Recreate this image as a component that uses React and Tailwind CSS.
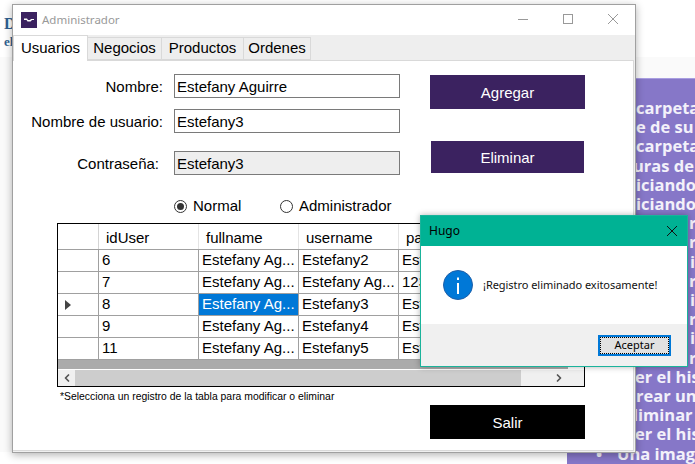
import React from 'react';
import { ChevronLeft, ChevronRight } from 'lucide-react';

const rows = [
  { id: '6', fullname: 'Estefany Ag...', username: 'Estefany2', pass: 'Estefany2' },
  { id: '7', fullname: 'Estefany Ag...', username: 'Estefany Ag...', pass: '12345678' },
  { id: '8', fullname: 'Estefany Ag...', username: 'Estefany3', pass: 'Estefany3', selected: true },
  { id: '9', fullname: 'Estefany Ag...', username: 'Estefany4', pass: 'Estefany4' },
  { id: '11', fullname: 'Estefany Ag...', username: 'Estefany5', pass: 'Estefany5' },
];

// fragments of the page behind the window, one per line
const backdropLines = [
  { text: 'carpeta', pad: 'ml-[69px]' },
  { text: 'e de su', pad: 'ml-[69px]' },
  { text: 'carpeta', pad: 'ml-[69px]' },
  { text: 'uras de', pad: 'ml-[66px]' },
  { text: 'iciando', pad: 'ml-[69px]' },
  { text: 'iciando', pad: 'ml-[69px]' },
  { text: 'r', pad: 'ml-[122px]' },
  { text: 'r', pad: 'ml-[122px]' },
  { text: 'i', pad: 'ml-[123px]' },
  { text: 'r', pad: 'ml-[122px]' },
  { text: 'i', pad: 'ml-[123px]' },
  { text: 'r', pad: 'ml-[122px]' },
  { text: 'i', pad: 'ml-[123px]' },
  { text: 'r', pad: 'ml-[122px]' },
  { text: 'er el his', pad: 'ml-[68px]' },
  { text: 'rear un', pad: 'ml-[69px]' },
  { text: 'liminar', pad: 'ml-[66px]' },
  { text: 'er el his', pad: 'ml-[68px]' },
];

const FormRow = ({ label, value, labelClass, className, disabled }) => (
  <div className={`flex items-center h-[24px] ${className}`}>
    <span className={`w-[161px] pt-[2px] text-right text-[15px] text-black shrink-0 ${labelClass}`}>{label}</span>
    <div className={`w-[226px] h-[24px] border border-[#7a7a7a] pl-[2px] pt-[2px] flex items-center text-[15px] text-black ${disabled ? 'bg-[#eeeeee]' : 'bg-white'}`}>
      {value}
    </div>
  </div>
);

const Radio = ({ label, checked, className }) => (
  <div className={`flex items-center gap-[6px] ${className}`}>
    <div className="w-[13px] h-[13px] rounded-full border border-[#333] flex items-center justify-center">
      {checked && <div className="w-[7px] h-[7px] rounded-full bg-[#333]" />}
    </div>
    <span className="text-[15px] text-black">{label}</span>
  </div>
);

const Cell = ({ children, selected }) => (
  <div className={`w-[100px] shrink-0 h-full border-r border-[#a0a0a0] pl-[3px] flex items-center whitespace-nowrap overflow-hidden ${selected ? 'bg-[#0078d7] text-white' : 'text-black'}`}>
    {children}
  </div>
);

const HeaderCell = ({ children }) => (
  <div className="w-[100px] shrink-0 h-full border-r border-[#e4e4e4] pl-[7px] pt-[4px] flex items-center">{children}</div>
);

const DataGrid = () => (
  <div className="ml-[44px] w-[528px] h-[164px] border-[1.5px] border-black text-[15px] overflow-hidden bg-white">
    <div className="flex h-[26px] border-b border-[#a0a0a0] text-black">
      <div className="w-[41px] shrink-0 border-r border-[#d4d4d4]" />
      <HeaderCell>idUser</HeaderCell>
      <HeaderCell>fullname</HeaderCell>
      <HeaderCell>username</HeaderCell>
      <HeaderCell>password</HeaderCell>
    </div>
    {rows.map((row) => (
      <div key={row.id} className="flex h-[22px] border-b border-[#a0a0a0]">
        <div className="w-[41px] shrink-0 border-r border-[#a0a0a0] flex items-center pl-[7px]">
          {row.selected && (
            <svg width="6" height="10" viewBox="0 0 6 10">
              <path d="M0 0 L6 5 L0 10 Z" fill="#444444" />
            </svg>
          )}
        </div>
        <Cell>{row.id}</Cell>
        <Cell selected={row.selected}>{row.fullname}</Cell>
        <Cell>{row.username}</Cell>
        <Cell>{row.pass}</Cell>
      </div>
    ))}
    <div className="w-[510px] h-[10px] bg-[#ababab] border-b border-white" />
    <div className="flex h-[16px] bg-[#f0f0f0] text-[#555]">
      <div className="w-[17px] flex items-center justify-center">
        <ChevronLeft size={12} strokeWidth={3.5} />
      </div>
      <div className="w-[446px] bg-[#cdcdcd]" />
      <div className="w-[47px] flex items-center justify-end pr-[3px]">
        <ChevronRight size={12} strokeWidth={3.5} />
      </div>
    </div>
  </div>
);

const ActionButton = ({ children, className }) => (
  <button className={`flex items-center justify-center pt-[2px] text-white text-[15px] ${className}`}>{children}</button>
);

const CloseGlyph = ({ size, stroke }) => (
  <svg width={size} height={size} viewBox="0 0 10 10" fill="none" stroke={stroke} strokeWidth="1">
    <path d="M0 0 L10 10 M10 0 L0 10" />
  </svg>
);

const Dialog = () => (
  <div className="absolute left-[420px] top-[215px] w-[268px] h-[152px] border border-[#1ab39b] bg-white flex flex-col shadow-[0_0_6px_rgba(0,0,0,0.3)] font-['Noto_Sans',sans-serif]">
    <div className="h-[30px] bg-[#00b294] flex items-center justify-between pl-[8px] pr-[10px] text-black text-[12px]">
      <span>Hugo</span>
      <CloseGlyph size={10} stroke="#111111" />
    </div>
    <div className="h-[78px] flex items-center pl-[22px] gap-[10px]">
      <svg width="30" height="30" viewBox="0 0 30 30" className="shrink-0">
        <circle cx="15" cy="15" r="14.5" fill="#0078d7" stroke="#1f5fa8" />
        <rect x="14" y="13" width="2" height="11" fill="white" />
        <rect x="14" y="7.5" width="2" height="2.5" fill="white" />
      </svg>
      <span className="text-[11px] tracking-[-0.05px] text-[#111]">¡Registro eliminado exitosamente!</span>
    </div>
    <div className="flex-1 bg-[#f0f0f0] flex justify-end items-start pt-[11px] pr-[16px]">
      <div className="w-[73px] h-[21px] border-2 border-[#0078d7] bg-[#e1e1e1] flex items-center justify-center text-[11px] text-black outline-1 outline-dotted outline-black -outline-offset-3">
        Aceptar
      </div>
    </div>
  </div>
);

export default function App() {
  return (
    <div className="relative w-[695px] h-[464px] overflow-hidden bg-white font-['Liberation_Sans',sans-serif]">
      {/* page behind the window */}
      <div className="h-[57px]" />
      <div className="h-[395px] bg-[#fafafa]" />

      <div className="absolute left-[4px] top-[15px] font-['Liberation_Serif',serif] font-bold text-[#2f5f8f] leading-[18px]">
        <div className="text-[16px]">D</div>
        <div className="text-[13px]">el</div>
      </div>

      <div className="absolute left-[567px] top-[78px] w-[128px] h-[386px] bg-[#8677c8] border-t border-[#a89de0] pt-[19px] overflow-hidden font-['Open_Sans',sans-serif] font-bold text-[16.5px] leading-[19.2px] text-white/90 whitespace-nowrap">
        {backdropLines.map((line, i) => (
          <div key={i} className={`w-fit ${line.pad}`}>{line.text}</div>
        ))}
        <div className="flex pl-[29px]">
          <span className="w-[24px]">•</span>
          <span>Una imag</span>
        </div>
      </div>

      {/* main window */}
      <div className="absolute left-[12px] top-[4px] w-[624px] h-[449px] border border-[#a0a0a0] bg-[#f0f0f0] flex flex-col shadow-[0_2px_8px_rgba(0,0,0,0.3)]">
        <div className="h-[30px] bg-white flex items-center shrink-0 pl-[8px]">
          <div className="w-[16px] h-[16px] bg-[#3b2260] flex items-center justify-center">
            <svg width="10" height="4" viewBox="0 0 10 4">
              <path d="M0 0.5 H3 L4 2 H6 L7 1 H10 V2 H8 L6.5 3.5 H3.5 L2.5 2 H0 Z" fill="white" />
            </svg>
          </div>
          <span className="ml-[5px] text-[11.5px] text-[#999999] font-['Noto_Sans',sans-serif]">Administrador</span>
          <div className="ml-auto flex items-center gap-[35px] pr-[17px] pb-[2px]">
            <svg width="10" height="10" viewBox="0 0 10 10" fill="none" stroke="#999999" strokeWidth="1">
              <path d="M0 5.5 H10" />
            </svg>
            <svg width="10" height="10" viewBox="0 0 10 10" fill="none" stroke="#999999" strokeWidth="1">
              <rect x="0.5" y="0.5" width="9" height="9" />
            </svg>
            <CloseGlyph size={10} stroke="#999999" />
          </div>
        </div>

        <div className="h-[25px] bg-[#eeeeee] flex items-end shrink-0 text-[15px] text-black">
          <div className="relative z-10 w-[75px] h-[26px] -mb-px bg-white border border-b-0 border-[#d9d9d9] flex items-center justify-center">Usuarios</div>
          <div className="w-[74px] h-[23px] border border-l-0 border-[#d9d9d9] flex items-center justify-center">Negocios</div>
          <div className="w-[82px] h-[23px] border border-l-0 border-[#d9d9d9] flex items-center justify-center">Productos</div>
          <div className="w-[67px] h-[23px] border border-l-0 border-[#d9d9d9] flex items-center justify-center">Ordenes</div>
        </div>

        <div className="w-[621px] h-[391px] bg-white border border-l-0 border-[#d9d9d9]">
          <div className="flex h-[162px]">
            <div className="w-[417px] pt-[13px] shrink-0">
              <FormRow label="Nombre:" value="Estefany Aguirre" labelClass="pr-[11px]" />
              <FormRow label="Nombre de usuario:" value="Estefany3" labelClass="pr-[11px]" className="mt-[11px]" />
              <FormRow label="Contraseña:" value="Estefany3" labelClass="pr-[15px]" className="mt-[18px]" disabled />
              <div className="flex mt-[20px] pl-[161px]">
                <Radio label="Normal" checked className="w-[106px]" />
                <Radio label="Administrador" />
              </div>
            </div>
            <div className="flex flex-col pt-[14px]">
              <ActionButton className="w-[155px] h-[34px] bg-[#3b2260]">Agregar</ActionButton>
              <ActionButton className="w-[153px] h-[32px] ml-px mt-[32px] bg-[#3b2260]">Eliminar</ActionButton>
            </div>
          </div>

          <DataGrid />

          <div className="flex">
            <p className="ml-[47px] mt-[4px] w-[370px] text-[10.4px] leading-[12px] text-black">
              *Selecciona un registro de la tabla para modificar o eliminar
            </p>
            <ActionButton className="w-[155px] h-[34px] mt-[18px] bg-black">Salir</ActionButton>
          </div>
        </div>
      </div>

      <Dialog />
    </div>
  );
}
